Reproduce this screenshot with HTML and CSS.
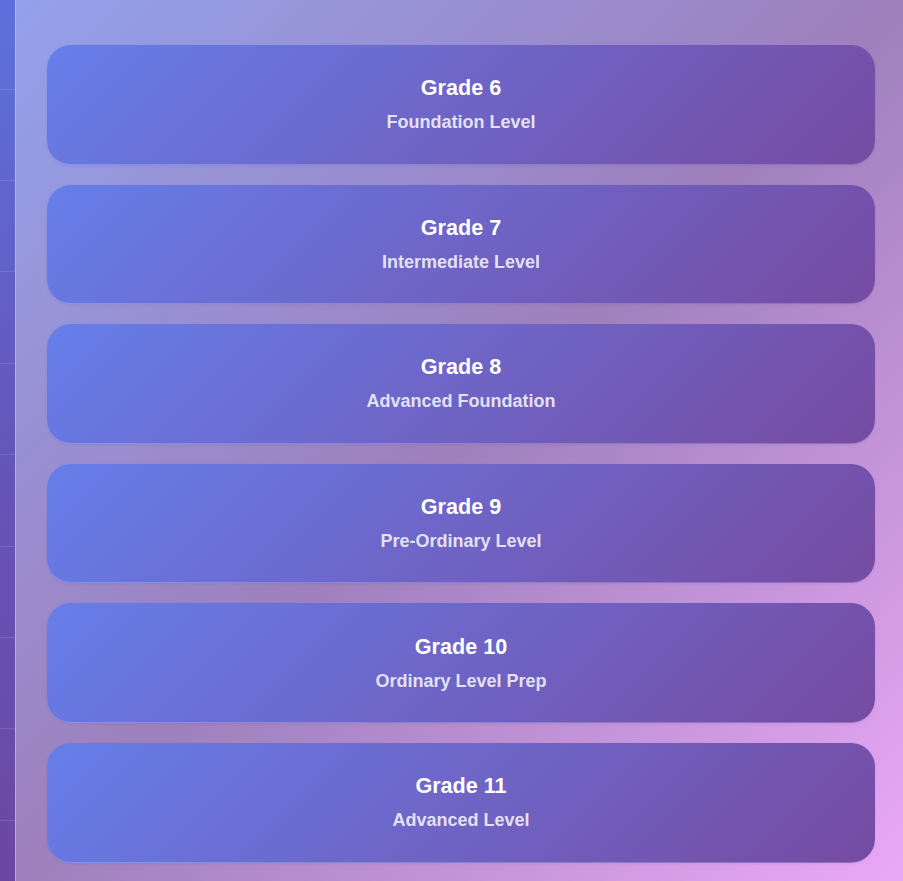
FILE: index.html
```html
<!DOCTYPE html>
<html lang="en">
<head>
<meta charset="utf-8">
<title>Grades</title>
<link rel="stylesheet" href="styles.css">
</head>
<body>
  <aside class="sidebar">
    <div class="nav-item"></div>
    <div class="nav-item"></div>
    <div class="nav-item"></div>
    <div class="nav-item"></div>
    <div class="nav-item"></div>
    <div class="nav-item"></div>
    <div class="nav-item"></div>
    <div class="nav-item"></div>
    <div class="nav-item"></div>
    <div class="nav-item"></div>
  </aside>
  <main class="main">
    <div class="card">
      <div class="card-title">Grade 6</div>
      <div class="card-sub">Foundation Level</div>
    </div>
    <div class="card">
      <div class="card-title">Grade 7</div>
      <div class="card-sub">Intermediate Level</div>
    </div>
    <div class="card">
      <div class="card-title">Grade 8</div>
      <div class="card-sub">Advanced Foundation</div>
    </div>
    <div class="card">
      <div class="card-title">Grade 9</div>
      <div class="card-sub">Pre-Ordinary Level</div>
    </div>
    <div class="card">
      <div class="card-title">Grade 10</div>
      <div class="card-sub">Ordinary Level Prep</div>
    </div>
    <div class="card">
      <div class="card-title">Grade 11</div>
      <div class="card-sub">Advanced Level</div>
    </div>
  </main>
</body>
</html>
```

FILE: styles.css
```css
* { box-sizing: border-box; }

html, body {
  margin: 0;
  height: 100%;
}

body {
  display: flex;
  overflow: hidden;
  font-family: "Liberation Sans", Arial, sans-serif;
  background: #8f7fc0;
}

.sidebar {
  width: 16px;
  flex: none;
  height: 100%;
  background: linear-gradient(180deg, #5d71dc 0%, #6554b8 55%, #6b47a2 100%);
  border-right: 1px solid rgba(200, 205, 255, 0.75);
  overflow: hidden;
}

.nav-item {
  height: 91.4px;
  border-bottom: 1px solid rgba(255, 255, 255, 0.12);
}

.nav-item:first-child {
  height: 89.6px;
}

.main {
  flex: 1;
  height: 100%;
  padding: 45px 28px 0 31px;
  display: flex;
  flex-direction: column;
  gap: 20px;
  background: linear-gradient(135deg, #93a1ea 0%, #9e80bd 50%, #eba8f7 100%);
}

.card {
  height: 119.6px;
  flex: none;
  border-radius: 24px;
  background: linear-gradient(135deg, #667eea 0%, #764ba2 100%);
  border-bottom: 1px solid rgba(255, 255, 255, 0.18);
  box-shadow: 0 1px 3px rgba(60, 30, 120, 0.08);
  display: flex;
  flex-direction: column;
  align-items: center;
  justify-content: center;
  color: #fff;
  text-align: center;
}

.card-title {
  font-size: 21.6px;
  font-weight: 700;
  line-height: 25px;
  margin-bottom: 12px;
}

.card-sub {
  font-size: 18px;
  font-weight: 700;
  line-height: 21px;
  color: rgba(255, 255, 255, 0.82);
}
```
